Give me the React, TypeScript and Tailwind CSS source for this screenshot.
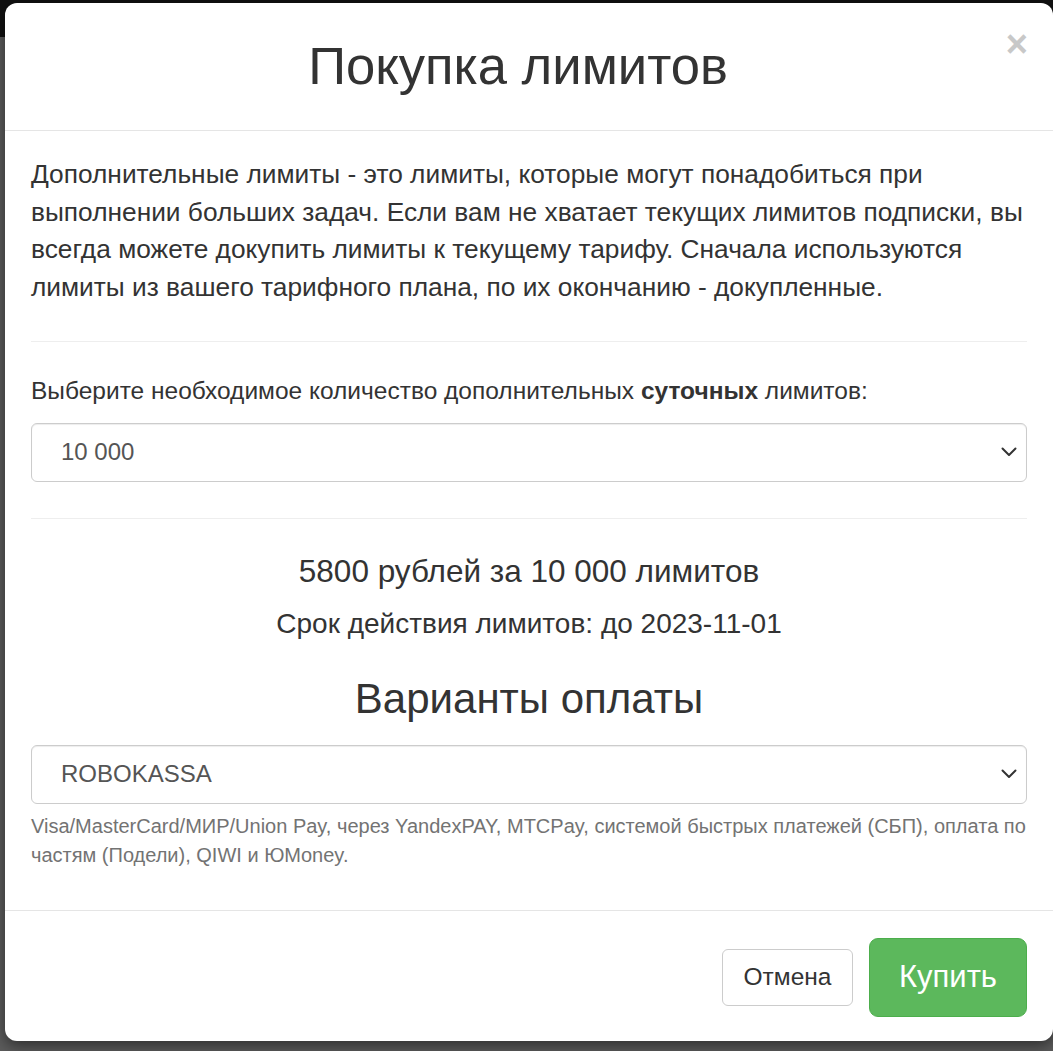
const font = { fontFamily: '"Liberation Sans", Arial, sans-serif' };

function SelectBox({ value }: { value: string }) {
  return (
    <div className="flex h-[59px] items-center justify-between rounded-[6px] border border-[#cccccc] bg-white pl-[29px] pr-[9px] shadow-[inset_0_1px_1px_rgba(0,0,0,0.075)]">
      <span className="text-[24px] text-[#555555]">{value}</span>
      <svg width="16" height="10" viewBox="0 0 16 10" fill="none">
        <path
          d="M1.5 1.5 L8 8 L14.5 1.5"
          stroke="#333333"
          strokeWidth="2"
          strokeLinecap="round"
          strokeLinejoin="round"
        />
      </svg>
    </div>
  );
}

export default function App() {
  return (
    <div
      className="relative h-[1051px] w-[1053px] overflow-hidden bg-[#5c5c5c]"
      style={font}
    >
      <div className="absolute left-0 top-0 h-[37px] w-full bg-[#111111]" />
      <div className="absolute left-[5px] top-[3px] flex h-[1038px] w-[1048px] flex-col rounded-[12px] bg-white text-[#333333] shadow-[0_5px_15px_rgba(0,0,0,0.5)]">
        {/* шапка */}
        <div className="relative flex h-[128px] items-center justify-center border-b border-[#e5e5e5] pr-[22px]">
          <h4 className="text-[52.6px] font-normal leading-none">Покупка лимитов</h4>
          <button className="absolute right-[25px] top-[22px] text-[38px] font-bold leading-none text-[#c8c8c8]">
            ×
          </button>
        </div>

        {/* тело */}
        <div className="flex-1 px-[26px] pt-[25px]">
          <p className="whitespace-nowrap text-[26.3px] leading-[37.7px]">
            <span className="block">
              Дополнительные лимиты - это лимиты, которые могут понадобиться при
            </span>
            <span className="block">
              выполнении больших задач. Если вам не хватает текущих лимитов
              подписки, вы
            </span>
            <span className="block">
              всегда можете докупить лимиты к текущему тарифу. Сначала
              используются
            </span>
            <span className="block">
              лимиты из вашего тарифного плана, по их окончанию - докупленные.
            </span>
          </p>
          <hr className="mb-[32px] mt-[34px] border-[#eeeeee]" />
          <label className="block text-[24.5px] leading-[34px]">
            Выберите необходимое количество дополнительных <b>суточных</b>{" "}
            лимитов:
          </label>
          <div className="mt-[15px]">
            <SelectBox value="10 000" />
          </div>
          <hr className="mb-[31px] mt-[36px] border-[#eeeeee]" />
          <div className="text-center">
            <div className="text-[31.5px] leading-[42px]">
              5800 рублей за 10 000 лимитов
            </div>
            <div className="mt-[13px] text-[28px] leading-[38px]">
              Срок действия лимитов: до 2023-11-01
            </div>
            <div className="mt-[30px] text-[42px] leading-[52px]">
              Варианты оплаты
            </div>
          </div>
          <div className="mt-[20px]">
            <SelectBox value="ROBOKASSA" />
          </div>
          <p className="mt-[8px] whitespace-nowrap text-[20px] leading-[29px] text-[#737373]">
            <span className="block">
              Visa/MasterCard/МИР/Union Pay, через YandexPAY, МТСPay, системой
              быстрых платежей (СБП), оплата по
            </span>
            <span className="block">частям (Подели), QIWI и ЮMoney.</span>
          </p>
        </div>

        {/* подвал */}
        <div className="flex h-[131px] items-center justify-end gap-[16px] border-t border-[#e5e5e5] px-[26px] pt-[2px]">
          <button className="h-[57px] w-[131px] rounded-[6px] border border-[#cccccc] bg-white text-[24.5px] text-[#333]">
            Отмена
          </button>
          <button className="h-[79px] w-[158px] rounded-[9px] border border-[#4cae4c] bg-[#5cb85c] text-[31px] text-white">
            Купить
          </button>
        </div>
      </div>
    </div>
  );
}
